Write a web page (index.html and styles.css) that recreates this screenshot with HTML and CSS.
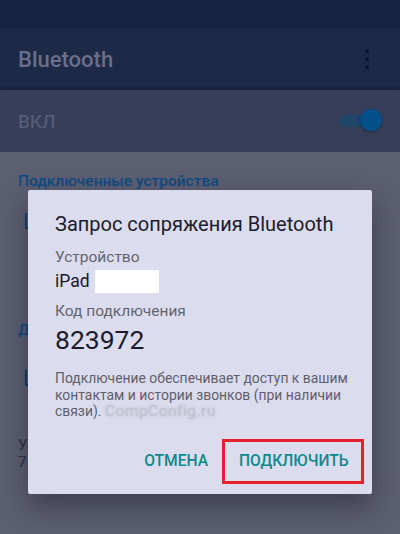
FILE: index.html
```html
<!DOCTYPE html>
<html lang="ru">
<head>
    <meta charset="UTF-8">
    <title>Bluetooth</title>
    <link rel="stylesheet" href="styles.css">
</head>
<body>
    <div class="screen">
        <div class="status"></div>
        <div class="toolbar">
            <h1>Bluetooth</h1>
            <div class="menu"><i></i><i></i><i></i></div>
        </div>
        <div class="switch-row">
            <span>ВКЛ</span>
            <div class="toggle"><b></b></div>
        </div>
        <div class="list">
            <h2>Подключенные устройства</h2>
            <div class="row"><span class="ico"></span></div>
            <h2 class="second">Доступные устройства</h2>
            <div class="row tall"><span class="ico"></span></div>
            <p class="hint">Устройство видно другим<br>7 устройств</p>
        </div>

        <div class="dialog">
            <div class="title">Запрос сопряжения Bluetooth</div>
            <div class="label">Устройство</div>
            <div class="value">iPad <span class="mask"></span></div>
            <div class="label">Код подключения</div>
            <div class="code">823972</div>
            <p class="note">Подключение обеспечивает доступ к вашим контактам и истории звонков (при наличии связи). <span class="mark">CompConfig.ru</span></p>
            <div class="actions">
                <button class="btn">ОТМЕНА</button>
                <button class="btn ok">ПОДКЛЮЧИТЬ</button>
            </div>
        </div>
    </div>
</body>
</html>
```

FILE: styles.css
```css
*{margin:0;padding:0;box-sizing:border-box;}
body{
    background-color:#5c5e72;
    font-family:Roboto,"Noto Sans",sans-serif;
}
.screen{
    width:400px;
    height:534px;
    position:relative;
    overflow:hidden;
    background-color:#5c5e72;
}
.status{
    height:28px;
    background-color:#17243f;
}
.toolbar{
    height:62px;
    background-color:#1c2947;
    display:flex;
    align-items:center;
    justify-content:space-between;
    padding:0 31px 0 18px;
}
.toolbar h1{
    font-size:22px;
    font-weight:500;
    color:#6a6f87;
}
.menu{
    display:flex;
    flex-direction:column;
    gap:4px;
}
.menu i{
    display:block;
    width:4px;
    height:4px;
    border-radius:50%;
    background-color:#0f1629;
}
.switch-row{
    height:62px;
    background-color:#373e59;
    display:flex;
    align-items:center;
    justify-content:space-between;
    padding:0 18px;
    box-shadow:0 -2px 3px rgba(0,0,0,.25);
}
.switch-row span{
    font-size:19px;
    color:#5b6079;
}
.toggle{
    width:40px;
    height:12px;
    border-radius:6px;
    background-color:#1f4568;
    position:relative;
    margin-right:3px;
}
.toggle b{
    position:absolute;
    right:-3px;
    top:-6px;
    width:22px;
    height:22px;
    border-radius:50%;
    background-color:#04508a;
    box-shadow:0 1px 3px rgba(0,0,0,.35);
}
.list{
    padding:19px 18px 0;
}
.list h2{
    font-size:15.5px;
    font-weight:500;
    color:#0f4b80;
    line-height:20px;
}
.list .second{
    margin-top:69px;
}
.row{
    height:60px;
    display:flex;
    align-items:center;
}
.row.tall{
    height:76px;
}
.ico{
    display:block;
    width:12px;
    height:16px;
    margin-left:7px;
    border-bottom:2px solid #193a5e;
    border-left:2px solid #193a5e;
}
.hint{
    margin-top:21px;
    font-size:15px;
    line-height:17px;
    color:#2e3040;
}
.dialog{
    position:absolute;
    left:28px;
    top:190px;
    width:344px;
    height:304px;
    background-color:#dcdcef;
    border-radius:2px;
    box-shadow:0 12px 28px rgba(20,20,40,.45);
    padding:21px 24px 0 27px;
}
.title{
    font-size:20px;
    line-height:26px;
    color:#1b1b2b;
    margin-bottom:10px;
}
.label{
    font-size:15.5px;
    line-height:20px;
    color:#64646f;
}
.value{
    font-size:17.5px;
    line-height:24px;
    color:#1b1b2b;
    display:flex;
    align-items:center;
    gap:5px;
    margin-top:2px;
    margin-bottom:8px;
}
.mask{
    display:inline-block;
    width:64px;
    height:23px;
    background-color:#fff;
}
.code{
    font-size:26.5px;
    line-height:32px;
    color:#1b1b2b;
    margin-top:3px;
}
.note{
    margin-top:14px;
    font-size:13.9px;
    line-height:16.5px;
    color:#5f5f6b;
}
.mark{
    color:#c4c4d0;
    font-size:15.5px;
    line-height:10px;
    letter-spacing:.5px;
    text-shadow:0 0 3px rgba(150,150,170,.5);
}
.actions{
    display:flex;
    justify-content:flex-end;
    align-items:center;
    margin-top:19px;
    margin-right:-16px;
}
.btn{
    font-family:Roboto,"Noto Sans",sans-serif;
    font-size:15.6px;
    font-weight:500;
    color:#0c8a8c;
    background:none;
    border:none;
    height:45px;
    padding:0 14px;
}
.ok{
    border:3px solid #e8202b;
    width:142px;
}
```
